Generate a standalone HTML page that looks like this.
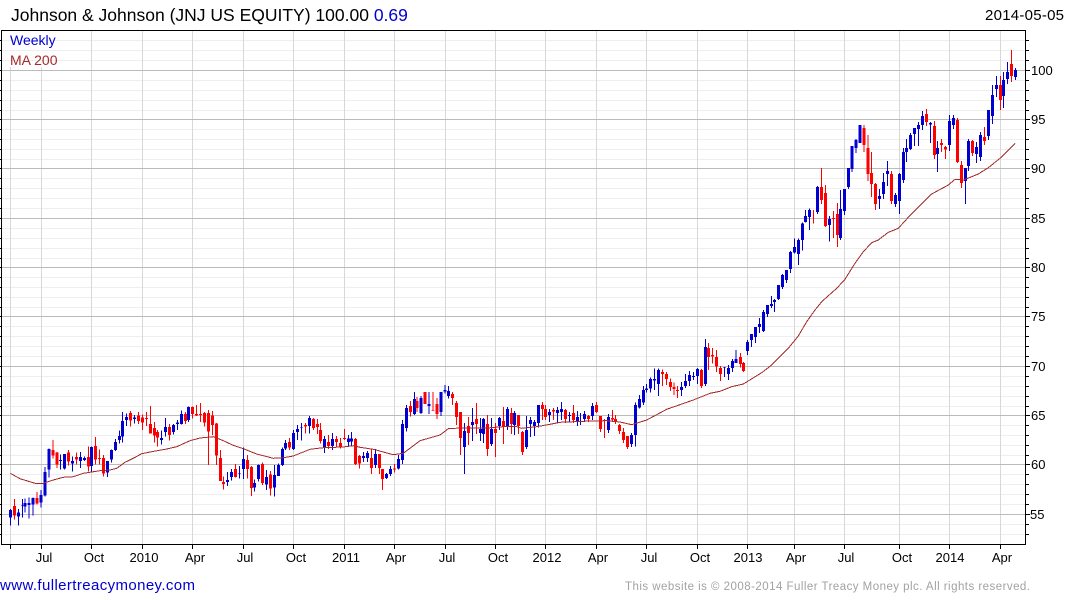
<!DOCTYPE html>
<html><head><meta charset="utf-8"><title>JNJ</title>
<style>
html,body{margin:0;padding:0;background:#fff;width:1075px;height:600px;overflow:hidden}
svg{display:block;font-family:"Liberation Sans",sans-serif}
.w,.b,.g{fill:none;shape-rendering:crispEdges}
.w{stroke-width:3}.b{stroke-width:9}
.bl{stroke:#0000d0}.rd{stroke:#ff0000}
.x{font-size:13px;fill:#000;text-anchor:middle}
.y{font-size:13px;fill:#000}
</style></head><body>
<svg width="1075" height="600" viewBox="0 0 1075 600">
<rect width="1075" height="600" fill="#fff"/>
<path class="g" stroke="#eeeeee" d="M2 40.5H1025M2 50.5H1025M2 60.5H1025M2 80.5H1025M2 90.5H1025M2 100.5H1025M2 110.5H1025M2 129.5H1025M2 139.5H1025M2 149.5H1025M2 159.5H1025M2 178.5H1025M2 188.5H1025M2 198.5H1025M2 208.5H1025M2 228.5H1025M2 238.5H1025M2 248.5H1025M2 258.5H1025M2 277.5H1025M2 287.5H1025M2 297.5H1025M2 307.5H1025M2 326.5H1025M2 336.5H1025M2 346.5H1025M2 356.5H1025M2 376.5H1025M2 386.5H1025M2 396.5H1025M2 406.5H1025M2 425.5H1025M2 435.5H1025M2 445.5H1025M2 455.5H1025M2 474.5H1025M2 484.5H1025M2 494.5H1025M2 504.5H1025M2 524.5H1025M2 534.5H1025"/>
<path class="g" stroke="#d8d8d8" d="M10.5 67V544M41.5 67V544M91.5 31V544M142.5 31V544M192.5 31V544M243.5 31V544M293.5 31V544M344.5 31V544M394.5 31V544M445.5 31V544M495.5 31V544M545.5 31V544M596.5 31V544M646.5 31V544M697.5 31V544M747.5 31V544M794.5 31V544M844.5 31V544M899.5 31V544M949.5 31V544M1000.5 31V544"/>
<path class="g" stroke="#bbbbbb" d="M2 70.5H1025M2 119.5H1025M2 168.5H1025M2 218.5H1025M2 267.5H1025M2 316.5H1025M2 366.5H1025M2 415.5H1025M2 464.5H1025M2 514.5H1025"/>
<path class="g" stroke="#000" d="M1.5 30.5H1025.5V544.5H1.5ZM10.5 545V549M41.5 545V549M91.5 545V549M142.5 545V549M192.5 545V549M243.5 545V549M293.5 545V549M344.5 545V549M394.5 545V549M445.5 545V549M495.5 545V549M545.5 545V549M596.5 545V549M646.5 545V549M697.5 545V549M747.5 545V549M794.5 545V549M844.5 545V549M899.5 545V549M949.5 545V549M1000.5 545V549"/>
<path class="g" stroke="#000" d="M1026 40.5H1029M1026 50.5H1029M1026 60.5H1029M1026 70.5H1030M1026 80.5H1029M1026 90.5H1029M1026 100.5H1029M1026 110.5H1029M1026 119.5H1030M1026 129.5H1029M1026 139.5H1029M1026 149.5H1029M1026 159.5H1029M1026 168.5H1030M1026 178.5H1029M1026 188.5H1029M1026 198.5H1029M1026 208.5H1029M1026 218.5H1030M1026 228.5H1029M1026 238.5H1029M1026 248.5H1029M1026 258.5H1029M1026 267.5H1030M1026 277.5H1029M1026 287.5H1029M1026 297.5H1029M1026 307.5H1029M1026 316.5H1030M1026 326.5H1029M1026 336.5H1029M1026 346.5H1029M1026 356.5H1029M1026 366.5H1030M1026 376.5H1029M1026 386.5H1029M1026 396.5H1029M1026 406.5H1029M1026 415.5H1030M1026 425.5H1029M1026 435.5H1029M1026 445.5H1029M1026 455.5H1029M1026 464.5H1030M1026 474.5H1029M1026 484.5H1029M1026 494.5H1029M1026 504.5H1029M1026 514.5H1030M1026 524.5H1029M1026 534.5H1029"/>
<path class="g" stroke="#000" d="M0 40.5H1M0 50.5H1M0 60.5H1M0 70.5H1M0 80.5H1M0 90.5H1M0 100.5H1M0 110.5H1M0 119.5H1M0 129.5H1M0 139.5H1M0 149.5H1M0 159.5H1M0 168.5H1M0 178.5H1M0 188.5H1M0 198.5H1M0 208.5H1M0 218.5H1M0 228.5H1M0 238.5H1M0 248.5H1M0 258.5H1M0 267.5H1M0 277.5H1M0 287.5H1M0 297.5H1M0 307.5H1M0 316.5H1M0 326.5H1M0 336.5H1M0 346.5H1M0 356.5H1M0 366.5H1M0 376.5H1M0 386.5H1M0 396.5H1M0 406.5H1M0 415.5H1M0 425.5H1M0 435.5H1M0 445.5H1M0 455.5H1M0 464.5H1M0 474.5H1M0 484.5H1M0 494.5H1M0 504.5H1M0 514.5H1M0 524.5H1M0 534.5H1"/>

<g transform="translate(.08,400) scale(.33333)">
<path class="w bl" d="M31 327V377M55 327V377M67 297V352M75 296V338M87 292V356M99 292V347M123 270V323M135 201V290M147 145V233M181 163V209M193 162V208M217 170V215M241 156V204M253 170V183M275 140V215M323 183V231M335 148V187M347 117V153M358 92V130M368 36V128M380 40V78M404 45V70M484 92V134M496 54V110M520 72V104M532 60V90M544 32V74M566 20V66"/>
<path class="b bl" d="M31 330V353M55 337V350M67 315V317M75 309V320M87 309V315M99 294V314M123 285V308M135 216V286M147 147V209M181 180V183M193 162V205M217 183V191M241 171V183M253 174V180M275 141V198M323 183V217M335 150V179M347 126V150M358 108V120M368 63V110M380 51V60M404 52V57M484 114V120M496 81V96M520 75V96M532 68V72M544 42V72M566 21V60"/>
<path class="w rd" d="M43 297V359M111 276V314M159 120V175M171 156V204M205 150V197M229 158V194M265 140V215M287 111V193M299 148V193M311 165V230M392 33V80M416 36V72M428 44V90M440 36V78M452 18V98M464 66V128M472 90V140M508 72V122M556 36V72M578 20V56M590 15V48M602 9V66M614 36V80M625 30V195M637 33V105M649 69V195"/>
<path class="b rd" d="M43 318V347M111 294V311M159 150V167M171 158V194M205 158V185M229 171V179M265 171V200M287 138V179M299 174V177M311 174V221M392 39V62M416 47V63M428 53V68M440 54V57M452 72V100M464 84V107M472 96V113M508 81V105M556 42V63M578 21V42M590 42V46M602 42V45M614 39V67M625 39V95M637 47V75M649 71V167"/>
</g>

<g transform="translate(210.08,400) scale(.33333)">
<path class="w bl" d="M52 216V258M64 207V242M88 198V236M100 142V237M133 238V275M145 194V245M169 210V270M193 195V290M205 191V228M217 142V198M226 120V150M250 90V150M262 75V120M274 69V122M298 48V100M343 108V159M367 99V150M415 105V139M425 96V138M460 156V186M472 153V186M496 147V204M529 219V237M541 198V228M565 165V208"/>
<path class="b bl" d="M52 240V246M64 216V231M88 219V221M100 177V207M133 249V263M145 195V237M169 231V253M193 225V263M205 195V228M217 147V195M226 129V145M250 99V147M262 87V96M274 81V83M298 54V78M343 117V143M367 117V138M415 115V126M425 115V125M460 168V174M472 159V174M496 162V195M529 222V234M541 207V222M565 177V206"/>
<path class="w rd" d="M31 150V243M41 230V268M76 192V233M112 165V235M124 198V288M157 187V255M181 213V287M238 114V150M286 69V100M310 54V90M322 57V102M331 69V130M355 105V147M379 108V141M391 114V145M403 87V120M436 114V195M448 165V205M484 147V222M508 162V222M518 207V270M553 192V218"/>
<path class="b rd" d="M31 174V243M41 246V252M76 207V231M112 180V207M124 201V264M157 192V249M181 223V265M238 126V142M286 75V80M310 57V84M322 72V81M331 90V123M355 126V138M379 117V126M391 129V141M403 114V117M436 117V192M448 168V190M484 174V204M508 162V204M518 207V237M553 206V208"/>
</g>

<g transform="translate(360.08,370) scale(.33333)">
<path class="w bl" d="M127 150V282M139 105V185M163 66V135M183 78V132M207 66V132M243 66V138M255 45V70M265 48V85M313 159V312M337 114V213M361 144V213M370 144V219M394 144V228M418 141V180M442 111V180M463 123V195M499 138V237M511 141V201M523 150V198M535 105V172M568 117V156M592 111V159M604 96V150M628 126V156M652 123V168M661 129V165M673 123V156M697 99V150M745 132V189M815 189V231"/>
<path class="b bl" d="M127 162V270M139 114V174M163 87V132M183 84V129M207 102V108M243 66V126M255 60V65M265 63V78M313 183V231M337 156V165M361 177V189M370 147V192M394 177V222M418 144V168M442 117V168M463 129V165M499 180V231M511 150V162M523 156V168M535 105V159M568 126V135M592 120V129M604 117V126M628 135V138M652 141V153M661 153V156M673 132V147M697 108V138M745 141V180M815 195V222"/>
<path class="w rd" d="M151 93V140M171 81V126M195 66V102M219 66V123M231 84V147M277 66V105M289 93V165M301 126V255M325 141V225M349 99V192M382 135V258M406 159V261M430 111V222M454 114V192M475 135V192M487 183V255M547 96V150M556 105V150M580 114V150M616 117V159M640 105V159M685 135V156M709 96V129M721 138V186M733 147V204M757 120V156M767 135V162M779 162V192M791 174V219M803 198V237"/>
<path class="b rd" d="M151 108V126M171 93V114M195 66V102M219 120V122M231 102V132M277 72V84M289 99V141M301 126V204M325 168V189M349 147V162M382 162V237M406 177V189M430 153V171M454 129V162M475 135V168M487 186V246M547 105V117M556 117V141M580 120V125M616 120V147M640 129V150M685 138V147M709 105V126M721 138V177M733 150V153M757 144V148M767 147V156M779 165V183M791 186V210M803 198V231"/>
</g>

<g transform="translate(600.08,330) scale(.33333)">
<path class="w bl" d="M107 218V350M118 195V235M130 168V225M140 162V188M152 142V187M163 115V180M175 115V198M244 156V198M256 132V174M268 123V168M280 126V150M292 114V162M316 27V168M374 111V141M385 105V150M397 87V126M408 60V99"/>
<path class="b bl" d="M107 225V315M118 207V232M130 180V218M140 175V180M152 147V175M163 147V152M175 120V162M244 171V180M256 153V168M268 135V153M280 138V141M292 117V138M316 51V162M374 111V113M385 114V132M397 93V114M408 87V99"/>
<path class="w rd" d="M187 118V168M199 126V165M211 145V183M222 157V195M232 168V204M304 117V174M326 39V120M338 54V100M350 60V126M361 108V153M421 69V112M430 96V126"/>
<path class="b rd" d="M187 126V132M199 132V147M211 156V171M222 171V177M232 180V183M304 120V168M326 54V81M338 75V80M350 81V110M361 114V132M421 81V102M430 99V123"/>
</g>

<g transform="translate(715.08,240) scale(.33333)">
<path class="w bl" d="M97 300V345M109 282V321M121 261V309M133 234V279M145 210V276M157 195V231M169 168V204M178 177V216M190 135V180M202 102V147M214 90V129M226 33V99"/>
<path class="b bl" d="M97 306V333M109 282V300M121 261V291M133 252V261M145 216V273M157 195V222M169 192V198M178 180V186M190 135V177M202 105V141M214 90V120M226 36V87"/>
</g>

<g transform="translate(740.08,160) scale(.33333)">
<path class="w bl" d="M163 235V280M175 235V315M187 187V272M196 150V187M208 145V210M232 78V162M268 168V245M301 90V240M313 87V165M325 24V87"/>
<path class="b bl" d="M163 261V278M175 240V282M187 190V240M196 168V186M208 150V171M232 81V156M268 177V195M301 147V234M313 87V153M325 24V81"/>
<path class="w rd" d="M220 150V190M244 24V132M256 75V201M280 153V234M292 129V261"/>
<path class="b rd" d="M244 81V120M256 99V198M280 174V177M292 162V225"/>
</g>

<g transform="translate(715.08,0) scale(.33333)">
<path class="w bl" d="M411 438V516M423 417V459M435 375V429M493 567V627M505 519V597M517 483V558M541 579V621M553 519V642M565 444V549M575 417V486M587 399V450M598 384V438M610 366V438M622 333V390M646 366V429M667 423V516M703 345V453M715 345V387M751 504V612M760 417V513M784 426V489M796 396V483M820 330V420M832 255V372M844 228V291M865 216V324M877 186V252M901 204V240"/>
<path class="b bl" d="M411 438V507M423 420V444M435 375V429M493 588V597M505 546V582M517 513V522M541 585V612M553 522V603M565 456V540M575 444V456M587 405V447M598 384V402M610 375V387M622 348V375M646 369V373M667 444V462M703 363V435M715 354V375M751 504V543M760 423V498M784 441V462M796 405V471M820 330V408M832 285V348M844 255V267M865 240V288M877 216V237M901 210V231"/>
<path class="w rd" d="M447 375V456M459 405V543M469 456V591M481 549V630M529 513V612M634 327V378M658 363V477M679 417V456M691 438V477M727 354V489M739 483V564M772 420V468M808 381V435M856 228V330M889 150V246"/>
<path class="b rd" d="M447 384V435M459 444V522M469 519V552M481 552V612M529 522V603M634 342V366M658 378V465M679 429V435M691 441V449M727 360V486M739 495V549M772 423V459M808 411V423M856 255V300M889 192V228"/>
</g>

<polyline fill="none" stroke="#a52a2a" stroke-width="1" shape-rendering="crispEdges" points="10.3,473.3 20,478.7 35,483.3 43.3,483.3 53.3,480 63.3,477.3 73.3,476.7 83.3,473.3 91.7,472 100,470.7 110,470 116.7,468.3 125,462.3 133.3,458.3 141.7,453.7 150,452 166.7,449 176.7,446.7 190,440.7 200,438 213.3,436.7 223.3,440.7 233.3,445.3 243.3,448.7 256.7,454 273.3,458.3 283.3,457.7 293.3,456 310,449.3 323.3,447.7 343.3,447 353.3,445.7 360,447.3 373.3,449.3 393.3,454.7 403.3,453.3 420,440.7 440,435 448.3,428.7 460,428 486.7,428 503.3,426.7 516.7,426.7 521.7,428.3 536.7,426.7 550,424.3 560,422.3 590,421 606.7,420.7 620,422 631.7,424.7 646.7,420 666.7,409.3 693.3,400 710,393.3 720,391.3 731.7,386.7 743.3,384 761.7,372.7 771.7,365 788.3,348.3 798.3,336 806.7,321.7 815,310 821.7,301.7 836.7,288.3 845,279.3 855,263.3 863.3,251.7 871.7,242.7 878.3,240 888.3,232.3 898.3,228.3 908.3,217.3 931.7,194 948.3,185 955,179.3 963.3,180 978.3,174 988.3,167.7 1000,158.3 1015,143.3"/>

<text x="11" y="21" font-size="17.5" fill="#000">Johnson &amp; Johnson (JNJ US EQUITY) 100.00 <tspan fill="#0000d0">0.69</tspan></text>
<text x="985" y="20" font-size="15" fill="#000" textLength="79">2014-05-05</text>
<text x="10" y="45" font-size="14" fill="#0000d0">Weekly</text>
<text x="10" y="65" font-size="14" fill="#a52a2a">MA 200</text>

<g class="yl">
<text class="y" x="1031" y="75">100</text>
<text class="y" x="1031" y="124">95</text>
<text class="y" x="1031" y="173">90</text>
<text class="y" x="1031" y="223">85</text>
<text class="y" x="1031" y="272">80</text>
<text class="y" x="1031" y="321">75</text>
<text class="y" x="1031" y="371">70</text>
<text class="y" x="1031" y="420">65</text>
<text class="y" x="1031" y="469">60</text>
<text class="y" x="1030" y="519">55</text>
</g>
<g>
<text class="x" x="44" y="562">Jul</text>
<text class="x" x="94" y="562">Oct</text>
<text class="x" x="144" y="562">2010</text>
<text class="x" x="195" y="562">Apr</text>
<text class="x" x="245" y="562">Jul</text>
<text class="x" x="296" y="562">Oct</text>
<text class="x" x="346" y="562">2011</text>
<text class="x" x="396" y="562">Apr</text>
<text class="x" x="447" y="562">Jul</text>
<text class="x" x="498" y="562">Oct</text>
<text class="x" x="547" y="562">2012</text>
<text class="x" x="598" y="562">Apr</text>
<text class="x" x="649" y="562">Jul</text>
<text class="x" x="700" y="562">Oct</text>
<text class="x" x="748" y="562">2013</text>
<text class="x" x="796" y="562">Apr</text>
<text class="x" x="846" y="562">Jul</text>
<text class="x" x="902" y="562">Oct</text>
<text class="x" x="950" y="562">2014</text>
<text class="x" x="1002" y="562">Apr</text>
</g>
<text x="0" y="590" font-size="15" fill="#0000d0" textLength="195">www.fullertreacymoney.com</text>
<text x="625" y="590" font-size="11.5" fill="#a2a2a2" textLength="405">This website is © 2008-2014 Fuller Treacy Money plc. All rights reserved.</text>
</svg>
</body></html>
